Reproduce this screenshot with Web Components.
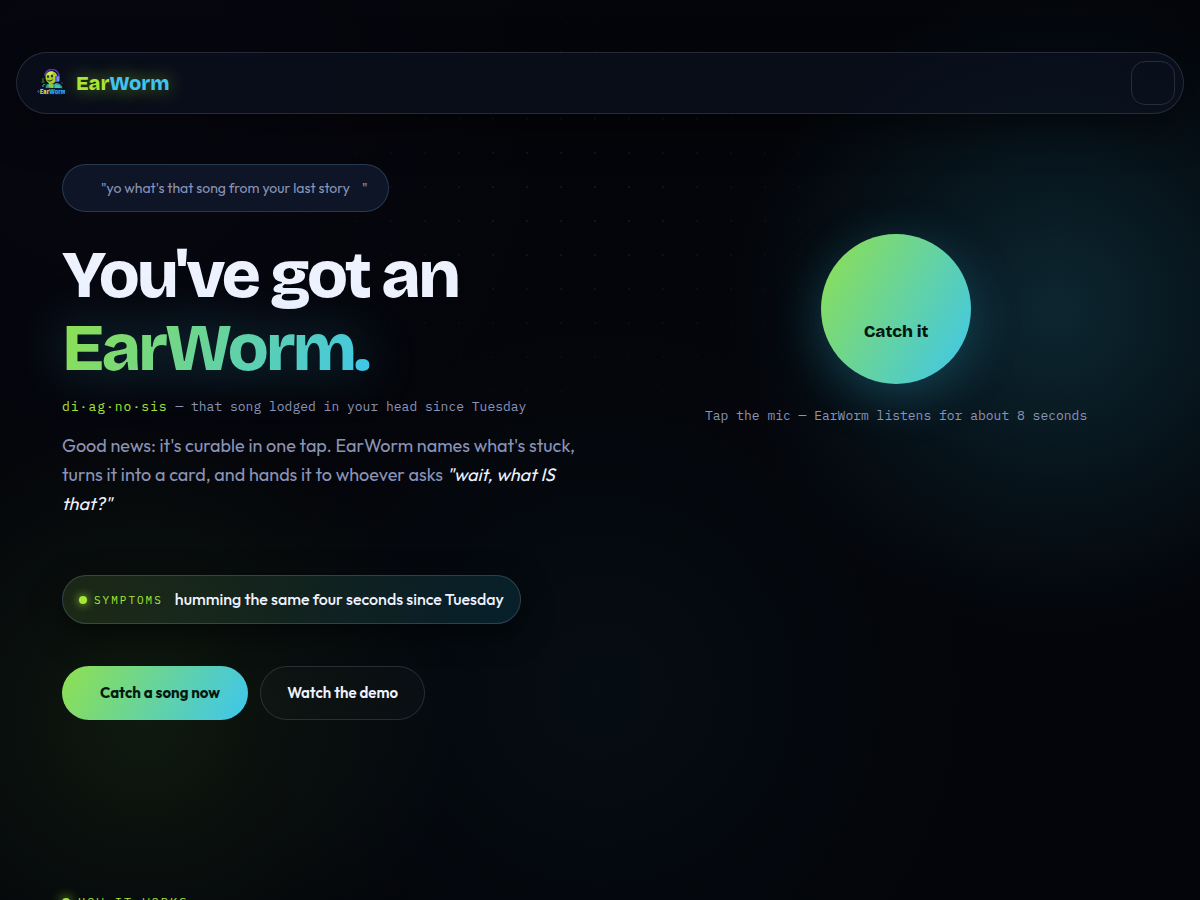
<!DOCTYPE html>
<html lang="en">
<head>
<meta charset="utf-8">
<meta name="viewport" content="width=device-width, initial-scale=1">
<title>EarWorm</title>
<style>
  :root {
    --bg: #04050a;
    --text: #eef2ff;
    --muted: #8b93b8;
    --lime: #a8e635;
    --cyan: #3fc4f0;
    --line: rgba(148, 163, 200, 0.2);
    --grad: linear-gradient(120deg, #8fe04e, #3dc6ee);
    --font-display: "Bricolage Grotesque", Inter, sans-serif;
    --font-body: Outfit, Lato, sans-serif;
    --font-mono: "IBM Plex Mono", "Liberation Mono", monospace;
  }

  body {
    margin: 0;
    background: var(--bg);
    color: var(--text);
    font-family: var(--font-body);
  }
</style>
</head>
<body>
<ew-page>
  <ew-nav slot="nav"></ew-nav>
  <ew-hero>
    <ew-quote slot="quote">yo what's that song from your last story</ew-quote>
    <ew-symptom slot="symptom" label="Symptoms">humming the same four seconds since Tuesday</ew-symptom>
    <ew-button slot="actions" variant="primary">Catch a song now</ew-button>
    <ew-button slot="actions" variant="ghost">Watch the demo</ew-button>
    <ew-mic slot="mic" label="Catch it">Tap the mic — EarWorm listens for about 8 seconds</ew-mic>
  </ew-hero>
  <ew-eyebrow>How it works</ew-eyebrow>
</ew-page>

<script>
/* Shared base: clones the template of the class into an open shadow root. */
class EwElement extends HTMLElement {
  connectedCallback() {
    if (this.shadowRoot) return;
    const template = document.createElement('template');
    template.innerHTML = this.constructor.html;
    this.attachShadow({ mode: 'open' }).appendChild(template.content.cloneNode(true));
    const label = this.shadowRoot.getElementById('label');
    if (label) label.textContent = this.getAttribute('label') || '';
  }
}

/* <ew-page>: backdrop glows, dot grid and the page column */
class EwPage extends EwElement {
  static html = `
    <style>
      :host {
        display: block;
        position: relative;
        min-height: 100vh;
        box-sizing: border-box;
        padding-top: 52px;
        background:
          radial-gradient(circle 320px at 88% 310px, rgba(30, 110, 130, 0.32), rgba(20, 90, 110, 0.16) 55%, transparent),
          radial-gradient(circle 310px at 12% 720px, rgba(60, 110, 35, 0.2), rgba(50, 90, 35, 0.09) 55%, transparent),
          radial-gradient(circle 360px at 50% 690px, rgba(10, 45, 55, 0.2), transparent),
          radial-gradient(circle 420px at 10% 120px, rgba(30, 20, 70, 0.1), transparent);
      }
      /* dots fade out away from the middle of the hero */
      :host::before {
        content: "";
        position: absolute;
        inset: 0;
        background: radial-gradient(rgba(150, 170, 220, 0.09) 1px, transparent 1px) 0 0 / 34px 34px;
        -webkit-mask: radial-gradient(ellipse 320px 240px at 48% 210px, #000 20%, transparent);
        mask: radial-gradient(ellipse 320px 240px at 48% 210px, #000 20%, transparent);
        pointer-events: none;
      }
      main { position: relative; padding: 0 62px 120px; }
    </style>
    <slot name="nav"></slot>
    <main><slot></slot></main>
  `;
}

/* <ew-logo>: mascot with headphones over its wordmark */
class EwLogo extends EwElement {
  static html = `
    <style>
      :host { display: block; width: 28px; height: 28px; }
      svg { display: block; width: 100%; height: 100%; }
    </style>
    <svg viewBox="0 0 56 56" aria-hidden="true">
      <path d="M16 14C16 4 25 0 32 1c8 1 13 8 12 16" fill="none" stroke="#5a36ab" stroke-width="3"/>
      <path d="M17 16c0-9 8-13 15-11 7 2 10 8 8 15-2 6-7 9-12 9-7 0-11-6-11-13z" fill="#a9cc34"/>
      <path d="M20 10c4-5 9-6 13-4l-4 5-8 3z" fill="#dbe765"/>
      <ellipse cx="22" cy="15" rx="2" ry="3" fill="#173222"/>
      <ellipse cx="30" cy="14" rx="2" ry="3" fill="#173222"/>
      <path d="M20 21c4 3 9 2 12-1-1 6-10 7-12 1z" fill="#12331f"/>
      <rect x="36" y="13" width="8" height="13" rx="4" fill="#7550d6"/>
      <rect x="40" y="15" width="5" height="10" rx="2" fill="#5f9cec"/>
      <path d="M18 39c-3-6 3-11 10-11l4 3 6-3c8 0 13 5 13 11z" fill="#2596a0"/>
      <path d="M24 28l9 1-1 10-9-3z" fill="#8ecb45"/>
      <path d="M36 31c6-1 11 1 12 8l-12 1z" fill="#42c6a8"/>
      <path d="M12 18v7M9 26h6M12 31h5" stroke="#3f8e46" stroke-width="2"/>
      <circle cx="12" cy="34" r="2" fill="#3279b8"/>
      <circle cx="50" cy="28" r="1" fill="#7db6f5"/>
      <path d="M0 45h6M50 45h6M3 42v6M53 42v6" stroke="#4c369a" stroke-width="2"/>
      <rect x="5" y="38" width="46" height="14" rx="4" fill="#0c1833"/>
      <text x="6" y="50" font-family="Inter, sans-serif" font-size="11" font-weight="900" fill="#d8cf3b">Ear<tspan fill="#2aa6df">Worm</tspan></text>
    </svg>
  `;
}

/* <ew-nav>: floating bar with the brand and the menu button */
class EwNav extends EwElement {
  static html = `
    <style>
      :host { display: block; position: relative; padding: 0 16px; }
      nav {
        display: flex;
        align-items: center;
        justify-content: space-between;
        padding: 8px 8px 8px 20px;
        border: 1px solid var(--line);
        border-radius: 999px;
        background: rgba(12, 18, 34, 0.6);
        box-shadow: 0 12px 40px rgba(0, 0, 0, 0.5);
      }
      a {
        display: flex;
        align-items: center;
        gap: 11px;
        color: var(--lime);
        font: 800 20px/28px var(--font-display);
        text-decoration: none;
      }
      .word { text-shadow: 0 0 18px rgba(168, 230, 53, 0.6); }
      .word span { color: var(--cyan); }
      button {
        width: 44px;
        height: 44px;
        padding: 0;
        border: 1px solid var(--line);
        border-radius: 14px;
        background: none;
      }
    </style>
    <nav>
      <a href="#"><ew-logo></ew-logo><span class="word">Ear<span>Worm</span></span></a>
      <button type="button" aria-label="Menu"></button>
    </nav>
  `;
}

class EwQuote extends EwElement {
  static html = `
    <style>
      :host {
        display: inline-flex;
        align-items: center;
        padding: 12px 20px 12px 38px;
        border: 1px solid rgba(110, 150, 190, 0.28);
        border-radius: 999px;
        background: #0d1526;
        color: var(--muted);
        font-size: 14px;
        line-height: 22px;
      }
      .end { margin-left: 12px; }
    </style>
    <span>"<slot></slot></span><span class="end">"</span>
  `;
}

/* <ew-symptom>: status pill */
class EwSymptom extends EwElement {
  static html = `
    <style>
      :host {
        display: inline-flex;
        align-items: center;
        gap: 12px;
        padding: 12px 16px;
        border: 1px solid rgba(120, 160, 180, 0.28);
        border-radius: 999px;
        background: linear-gradient(120deg, rgba(90, 120, 50, 0.24), rgba(15, 80, 105, 0.3));
        box-shadow: 0 10px 30px rgba(0, 0, 0, 0.5);
        color: var(--text);
        font-size: 16px;
        font-weight: 500;
        line-height: 23px;
      }
      .tag {
        display: flex;
        align-items: center;
        gap: 7px;
        color: var(--lime);
        font: 11px/22px var(--font-mono);
        letter-spacing: 2px;
        text-transform: uppercase;
      }
      .tag::before {
        content: "";
        width: 8px;
        height: 8px;
        border-radius: 50%;
        background: var(--lime);
        box-shadow: 0 0 10px var(--lime);
      }
    </style>
    <span class="tag" id="label"></span>
    <span><slot></slot></span>
  `;
}

/* <ew-button variant="primary|ghost"> */
class EwButton extends EwElement {
  static html = `
    <style>
      :host { display: block; }
      button {
        padding: 15px 26px;
        border: 1px solid var(--line);
        border-radius: 999px;
        background: rgba(255, 255, 255, 0.02);
        color: var(--text);
        font: 600 15px/22px var(--font-body);
      }
      :host([variant="primary"]) button {
        padding: 16px 28px 16px 38px;
        border: 0;
        background: var(--grad);
        color: #05180f;
        font-weight: 700;
      }
    </style>
    <button type="button"><slot></slot></button>
  `;
}

/* <ew-mic>: round listen button with its hint below */
class EwMic extends EwElement {
  static html = `
    <style>
      :host {
        display: flex;
        flex-direction: column;
        align-items: center;
        gap: 22px;
        color: var(--muted);
        font: 13px/20px var(--font-mono);
        text-align: center;
      }
      button {
        width: 150px;
        height: 150px;
        padding: 46px 0 0;
        border: 0;
        border-radius: 50%;
        background: var(--grad);
        box-shadow: 0 12px 50px rgba(50, 180, 215, 0.3);
        color: #05180f;
        font: 800 17px/24px var(--font-display);
      }
    </style>
    <button type="button" id="label"></button>
    <span><slot></slot></span>
  `;
}

/* <ew-hero>: headline column and mic column */
class EwHero extends EwElement {
  static html = `
    <style>
      :host {
        display: grid;
        grid-template-columns: 11fr 10fr;
        gap: 60px;
        padding: 50px 0 174px;
      }
      .mic { padding-top: 70px; }
      h1 {
        margin: 27px 0 0;
        font: 800 67px/73px var(--font-display);
        letter-spacing: -3px;
      }
      h1 span { display: block; }
      .name {
        width: fit-content;
        padding-right: 4px;
        background: var(--grad);
        -webkit-background-clip: text;
        background-clip: text;
        color: transparent;
        filter: drop-shadow(0 0 26px rgba(50, 180, 205, 0.35));
      }
      .diagnosis {
        margin: 12px 0 14px;
        color: var(--muted);
        font: 13px/20px var(--font-mono);
      }
      .diagnosis span { color: var(--lime); letter-spacing: 1px; }
      .lead {
        margin: 0 0 57px;
        color: var(--muted);
        font-size: 18px;
        line-height: 29px;
      }
      .lead em { color: var(--text); }
      .actions { display: flex; gap: 12px; margin-top: 42px; }
    </style>
    <div>
      <slot name="quote"></slot>
      <h1><span>You've got an</span><span class="name">EarWorm.</span></h1>
      <p class="diagnosis"><span>di·ag·no·sis</span> — that song lodged in your head since Tuesday</p>
      <p class="lead">Good news: it's curable in one tap. EarWorm names what's stuck, turns it into a card, and hands it to whoever asks <em>"wait, what IS that?"</em></p>
      <slot name="symptom"></slot>
      <div class="actions"><slot name="actions"></slot></div>
    </div>
    <div class="mic"><slot name="mic"></slot></div>
  `;
}

/* <ew-eyebrow>: small section heading behind a glowing dot */
class EwEyebrow extends EwElement {
  static html = `
    <style>
      :host {
        display: flex;
        align-items: center;
        gap: 8px;
        color: var(--lime);
        font: 12px/16px var(--font-mono);
        letter-spacing: 2px;
        text-transform: uppercase;
      }
      :host::before {
        content: "";
        width: 8px;
        height: 8px;
        border-radius: 50%;
        background: var(--lime);
        box-shadow: 0 0 12px var(--lime);
      }
    </style>
    <span><slot></slot></span>
  `;
}

customElements.define('ew-page', EwPage);
customElements.define('ew-logo', EwLogo);
customElements.define('ew-nav', EwNav);
customElements.define('ew-quote', EwQuote);
customElements.define('ew-symptom', EwSymptom);
customElements.define('ew-button', EwButton);
customElements.define('ew-mic', EwMic);
customElements.define('ew-hero', EwHero);
customElements.define('ew-eyebrow', EwEyebrow);
</script>
</body>
</html>
